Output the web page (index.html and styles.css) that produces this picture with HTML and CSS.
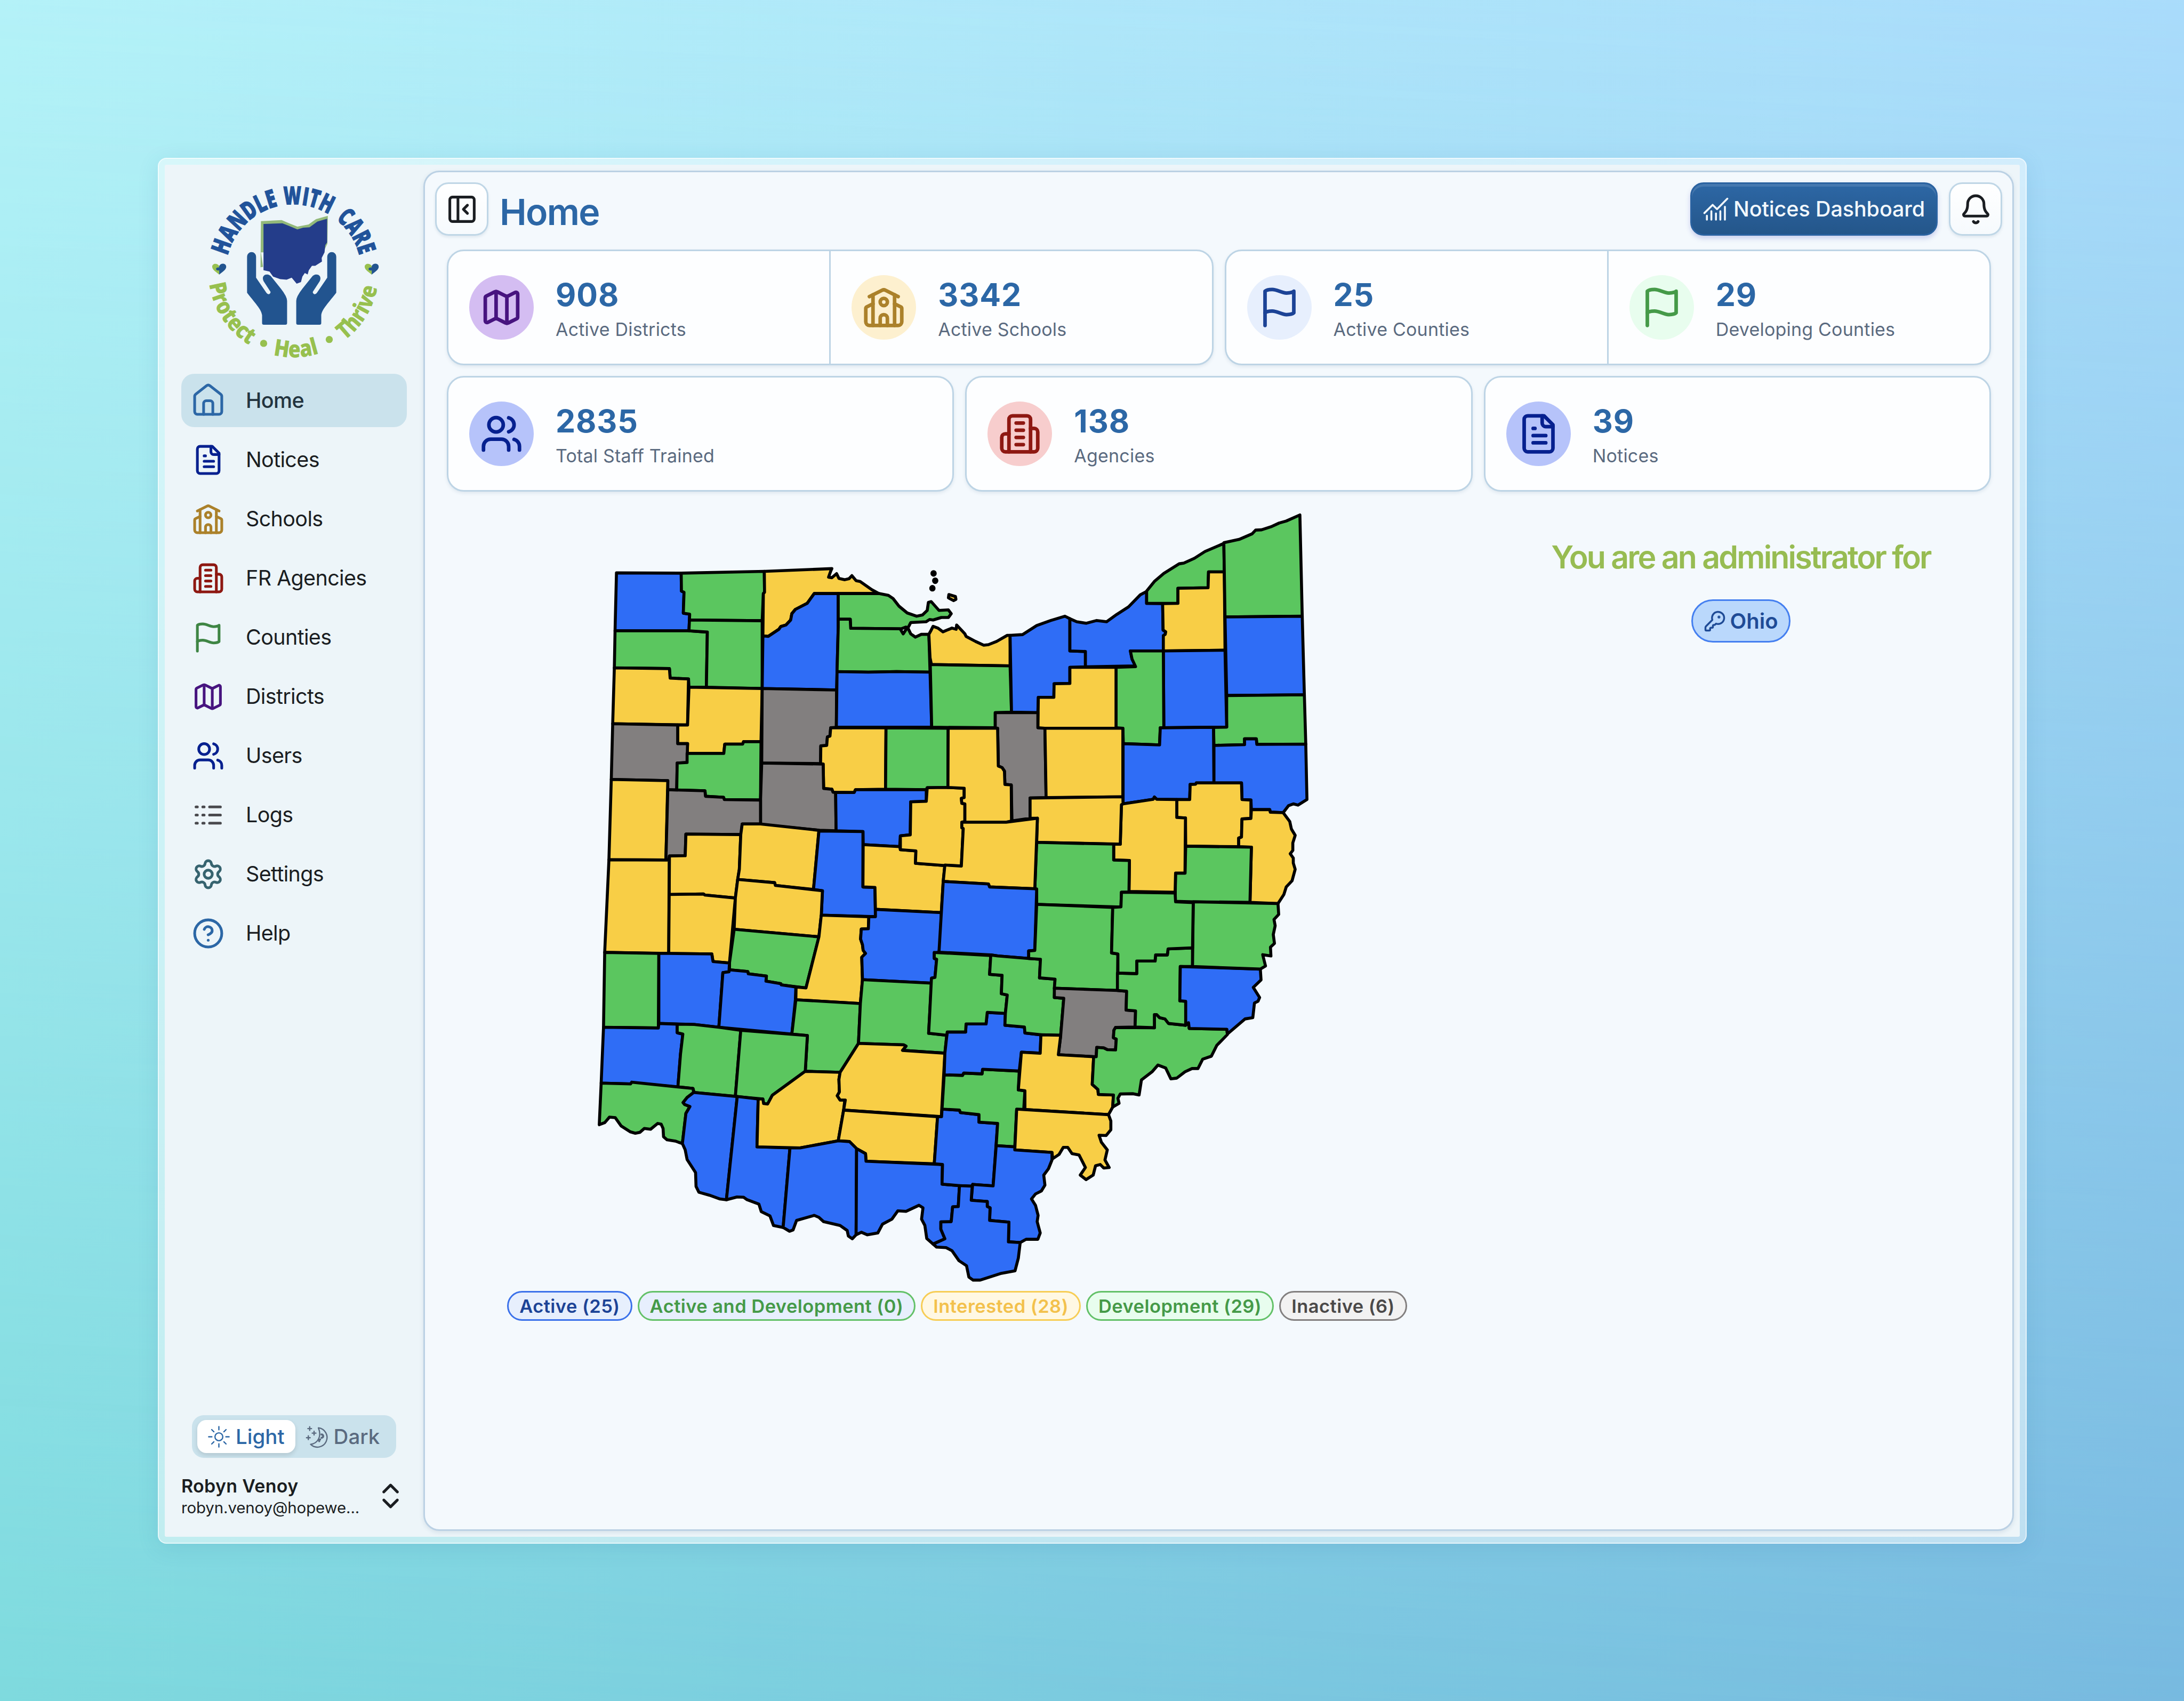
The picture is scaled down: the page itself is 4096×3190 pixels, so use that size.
FILE: index.html
```html
<!DOCTYPE html>
<html lang="en">
<head>
<meta charset="utf-8">
<title>Handle With Care</title>
<link rel="stylesheet" href="styles.css">
</head>
<body>
<svg class="sprite" aria-hidden="true">
  <symbol id="i-home" viewBox="0 0 24 24"><path d="M2 8.8a2 2 0 0 1 .8-1.6l8-6.3a2 2 0 0 1 2.4 0l8 6.3a2 2 0 0 1 .8 1.6V20a2 2 0 0 1-2 2H4a2 2 0 0 1-2-2z"/><path d="M8.6 22v-8a2 2 0 0 1 2-2h2.8a2 2 0 0 1 2 2v8"/></symbol>
  <symbol id="i-file" viewBox="0 0 24 24"><path d="M15 2H6a2 2 0 0 0-2 2v16a2 2 0 0 0 2 2h12a2 2 0 0 0 2-2V7Z"/><path d="M14 2v4a2 2 0 0 0 2 2h4"/><path d="M10 9H9"/><path d="M16 13H9"/><path d="M16 17H9"/></symbol>
  <symbol id="i-school" viewBox="0 0 24 24"><path d="M14 22v-4a2 2 0 1 0-4 0v4"/><path d="m18 10 3.447 1.724a1 1 0 0 1 .553.894V20a2 2 0 0 1-2 2H4a2 2 0 0 1-2-2v-7.382a1 1 0 0 1 .553-.894L6 10"/><path d="M18 5v17"/><path d="m4 6 7.106-3.553a2 2 0 0 1 1.788 0L20 6"/><path d="M6 5v17"/><circle cx="12" cy="9" r="2"/></symbol>
  <symbol id="i-building" viewBox="0 0 24 24"><path d="M6 22V4a2 2 0 0 1 2-2h8a2 2 0 0 1 2 2v18Z"/><path d="M6 12H4a2 2 0 0 0-2 2v6a2 2 0 0 0 2 2h2"/><path d="M18 9h2a2 2 0 0 1 2 2v9a2 2 0 0 1-2 2h-2"/><path d="M10 6h4"/><path d="M10 10h4"/><path d="M10 14h4"/><path d="M10 18h4"/></symbol>
  <symbol id="i-flag" viewBox="0 0 24 24"><path d="M4 15s1-1 4-1 5 2 8 2 4-1 4-1V3s-1 1-4 1-5-2-8-2-4 1-4 1z"/><path d="M4 22v-7"/></symbol>
  <symbol id="i-map" viewBox="0 0 24 24"><path d="M14.106 5.553a2 2 0 0 0 1.788 0l3.659-1.83A1 1 0 0 1 21 4.619v12.764a1 1 0 0 1-.553.894l-4.553 2.277a2 2 0 0 1-1.788 0l-4.212-2.106a2 2 0 0 0-1.788 0l-3.659 1.83A1 1 0 0 1 3 19.381V6.618a1 1 0 0 1 .553-.894l4.553-2.277a2 2 0 0 1 1.788 0z"/><path d="M15 5.764v15"/><path d="M9 3.236v15"/></symbol>
  <symbol id="i-users" viewBox="0 0 24 24"><path d="M16 21v-2a4 4 0 0 0-4-4H6a4 4 0 0 0-4 4v2"/><circle cx="9" cy="7" r="4"/><path d="M22 21v-2a4 4 0 0 0-3-3.87"/><path d="M16 3.13a4 4 0 0 1 0 7.75"/></symbol>
  <symbol id="i-logs" viewBox="0 0 24 24"><path d="M13 12h8M13 18h8M13 6h8M3 12h1M3 18h1M3 6h1M8 12h1M8 18h1M8 6h1"/></symbol>
  <symbol id="i-gear" viewBox="0 0 24 24"><path d="M9.671 4.136a2.34 2.34 0 0 1 4.659 0 2.34 2.34 0 0 0 3.319 1.915 2.34 2.34 0 0 1 2.33 4.033 2.34 2.34 0 0 0 0 3.831 2.34 2.34 0 0 1-2.33 4.033 2.34 2.34 0 0 0-3.319 1.915 2.34 2.34 0 0 1-4.659 0 2.34 2.34 0 0 0-3.32-1.915 2.34 2.34 0 0 1-2.33-4.033 2.34 2.34 0 0 0 0-3.831A2.34 2.34 0 0 1 6.35 6.051a2.34 2.34 0 0 0 3.319-1.915"/><circle cx="12" cy="12" r="3"/></symbol>
  <symbol id="i-help" viewBox="0 0 24 24"><circle cx="12" cy="12" r="10"/><path d="M9.09 9a3 3 0 0 1 5.83 1c0 2-3 3-3 3"/><path d="M12 17h.01"/></symbol>
  <symbol id="i-bell" viewBox="0 0 24 24"><path d="M10.268 21a2 2 0 0 0 3.464 0"/><path d="M3.262 15.326A1 1 0 0 0 4 17h16a1 1 0 0 0 .74-1.673C19.41 13.956 18 12.499 18 8A6 6 0 0 0 6 8c0 4.499-1.411 5.956-2.738 7.326"/></symbol>
  <symbol id="i-panel" viewBox="0 0 24 24"><rect x="3" y="3" width="18" height="18" rx="2"/><path d="M9 3v18"/><path d="m16 15-3-3 3-3"/></symbol>
  <symbol id="i-updown" viewBox="0 0 24 24"><path d="m7 15 5 5 5-5"/><path d="m7 9 5-5 5 5"/></symbol>
  <symbol id="i-key" viewBox="0 0 24 24"><path d="M2.586 17.414A2 2 0 0 0 2 18.828V21a1 1 0 0 0 1 1h3a1 1 0 0 0 1-1v-1a1 1 0 0 1 1-1h1a1 1 0 0 0 1-1v-1a1 1 0 0 1 1-1h.172a2 2 0 0 0 1.414-.586l.814-.814a6.5 6.5 0 1 0-4-4z"/><circle cx="16.5" cy="7.5" r=".5" fill="currentColor"/></symbol>
  <symbol id="i-chart" viewBox="0 0 24 24"><path d="M1.200 15.800 9 8.100l4.100 4L22.800 2.300"/><path d="M3.600 18.300V22M7.800 14V22M12.100 16.100V22M16.200 14V22M20.500 9.900V22"/></symbol>
  <symbol id="i-sun" viewBox="0 0 24 24"><circle cx="12" cy="12" r="4.300"/><path d="M12 .8v3.500M12 19.700v3.500M.8 12h3.500M19.700 12h3.500M4.100 4.100l2.400 2.400M17.500 17.500l2.400 2.400M19.900 4.100l-2.400 2.400M6.500 17.500l-2.400 2.400"/></symbol>
  <symbol id="i-moon" viewBox="0 0 24 24"><path d="M13.500 2.200A10.600 10.600 0 1 1 5 20.300C13 19.300 17.500 11.500 13.500 2.200z"/><path d="M17 9.500a1.600 1.600 0 0 1 0 3.600M15.500 15a1.200 1.200 0 0 0-1 1.800" stroke-width="2.200"/><path d="M4 1v4M2 3h4M8.800 6v4M6.800 8h4M2.500 11v4M.5 13h4"/></symbol>
</svg>

<div class="window">
  <aside class="sidebar">
    <svg class="logo" viewBox="0 0 1440 1380">
      <defs>
        <path id="arc-top" d="M272 585A475 475 0 0 1 1194 585"/>
        <path id="arc-bottom" d="M143 782A596 596 0 0 0 1323 786"/>
        <g id="hand"><path d="M408 590a31.500 31.500 0 0 1 63 0V738L543 843q8 12 19 10q12-5 10-17L524 763C512 740 520 715 548 715Q566 716 577 730L645 815Q688 870 688 900V1055q0 12-12 12H525q-12 0-12-12V1000C507 960 480 935 408 843Z"/></g>
        <g id="heart"><path class="logo-green" d="M0 38C-20 20-49 5-49-18C-49-40-14-46 0-22Z"/><path class="logo-blue" d="M0 38C20 20 49 5 49-16C49-42 12-46 0-22V-12Q-22-14-22 0Q-20 12 0 8Z"/></g>
      </defs>
      <text class="logo-top"><textPath href="#arc-top" startOffset="0" textLength="522" lengthAdjust="spacingAndGlyphs">HANDLE</textPath></text>
      <text class="logo-top"><textPath href="#arc-top" startOffset="560" textLength="332" lengthAdjust="spacingAndGlyphs">WITH</textPath></text>
      <text class="logo-top"><textPath href="#arc-top" startOffset="950" textLength="308" lengthAdjust="spacingAndGlyphs">CARE</textPath></text>
      <text class="logo-bottom"><textPath href="#arc-bottom" startOffset="0" textLength="526" lengthAdjust="spacingAndGlyphs">Protect</textPath></text>
      <text class="logo-bottom"><textPath href="#arc-bottom" startOffset="710" textLength="326" lengthAdjust="spacingAndGlyphs">Heal</textPath></text>
      <text class="logo-bottom"><textPath href="#arc-bottom" startOffset="1238" textLength="446" lengthAdjust="spacingAndGlyphs">Thrive</textPath></text>
      <circle class="logo-green" cx="524" cy="1197" r="25"/>
      <circle class="logo-green" cx="983" cy="1170" r="25"/>
      <path class="logo-edge" d="M505 342L650 335L700 356L760 380L838 365L890 328L973 305L970 500L940 560H505L520 662L502 665Z"/>
      <path class="logo-state" d="M523 362L655 357L700 375L760 400L800 388L845 385L900 345L968 325V490L955 510L950 560L930 600L932 625L885 655L862 655L840 685L832 715L812 705L795 730L785 768L755 780L720 738L685 752L640 748L590 730L565 695L523 685Z"/>
      <use class="logo-blue" href="#hand"/>
      <use class="logo-blue" href="#hand" transform="matrix(-1 0 0 1 1440 0)"/>
      <use href="#heart" transform="translate(213 678)"/>
      <use href="#heart" transform="translate(1280 678)"/>
    </svg>

    <nav class="nav">
      <a class="nav-item active c-home"><svg class="icon"><use href="#i-home"/></svg><span>Home</span></a>
      <a class="nav-item c-notices"><svg class="icon"><use href="#i-file"/></svg><span>Notices</span></a>
      <a class="nav-item c-schools"><svg class="icon"><use href="#i-school"/></svg><span>Schools</span></a>
      <a class="nav-item c-agencies"><svg class="icon"><use href="#i-building"/></svg><span>FR Agencies</span></a>
      <a class="nav-item c-counties"><svg class="icon"><use href="#i-flag"/></svg><span>Counties</span></a>
      <a class="nav-item c-districts"><svg class="icon"><use href="#i-map"/></svg><span>Districts</span></a>
      <a class="nav-item c-notices"><svg class="icon"><use href="#i-users"/></svg><span>Users</span></a>
      <a class="nav-item c-logs"><svg class="icon"><use href="#i-logs"/></svg><span>Logs</span></a>
      <a class="nav-item c-settings"><svg class="icon"><use href="#i-gear"/></svg><span>Settings</span></a>
      <a class="nav-item c-home"><svg class="icon"><use href="#i-help"/></svg><span>Help</span></a>
    </nav>

    <div class="theme">
      <button class="theme-btn on"><svg class="icon"><use href="#i-sun"/></svg><span>Light</span></button>
      <button class="theme-btn"><svg class="icon"><use href="#i-moon"/></svg><span>Dark</span></button>
    </div>

    <div class="user">
      <div class="user-text">
        <div class="user-name">Robyn Venoy</div>
        <div class="user-mail">robyn.venoy@hopewe...</div>
      </div>
      <svg class="icon"><use href="#i-updown"/></svg>
    </div>
  </aside>

  <main class="panel">
    <header class="header">
      <button class="square"><svg class="icon"><use href="#i-panel"/></svg></button>
      <h1>Home</h1>
      <button class="primary"><svg class="icon"><use href="#i-chart"/></svg><span>Notices Dashboard</span></button>
      <button class="square"><svg class="icon"><use href="#i-bell"/></svg></button>
    </header>

    <section class="stats stats-2">
      <div class="card">
        <div class="stat"><div class="badge b-districts"><svg class="icon"><use href="#i-map"/></svg></div><div><div class="num">908</div><div class="label">Active Districts</div></div></div>
        <div class="stat"><div class="badge b-schools"><svg class="icon"><use href="#i-school"/></svg></div><div><div class="num">3342</div><div class="label">Active Schools</div></div></div>
      </div>
      <div class="card">
        <div class="stat"><div class="badge b-active"><svg class="icon"><use href="#i-flag"/></svg></div><div><div class="num">25</div><div class="label">Active Counties</div></div></div>
        <div class="stat"><div class="badge b-dev"><svg class="icon"><use href="#i-flag"/></svg></div><div><div class="num">29</div><div class="label">Developing Counties</div></div></div>
      </div>
    </section>
    <section class="stats stats-3">
      <div class="card"><div class="stat"><div class="badge b-staff"><svg class="icon"><use href="#i-users"/></svg></div><div><div class="num">2835</div><div class="label">Total Staff Trained</div></div></div></div>
      <div class="card"><div class="stat"><div class="badge b-agencies"><svg class="icon"><use href="#i-building"/></svg></div><div><div class="num">138</div><div class="label">Agencies</div></div></div></div>
      <div class="card"><div class="stat"><div class="badge b-staff"><svg class="icon"><use href="#i-file"/></svg></div><div><div class="num">39</div><div class="label">Notices</div></div></div></div>
    </section>

    <section class="content">
      <div class="map-col">
        <svg class="map" viewBox="0 0 1700 1812">
          <g transform="scale(.54847 .58673)">
            <g>
              <path class="A" d="M100 263L375 264 376 335 387 340 384 423 411 427 408 493 94 493Z"/>
              <path class="D" d="M375 264L728 257 729 340 724 345 719 453 410 450 411 427 384 423 387 340 376 335Z"/>
              <path class="I" d="M728 257L1015 246 1010 256 1001 280 1015 282 1035 266 1045 285 1070 290 1088 286 1100 274 1118 294 1135 297 1185 330 1215 345 940 345 910 384 860 408 845 425 840 450 820 470 798 476 790 487 745 515 722 513 724 345 729 340Z"/>
              <path class="D" d="M94 493L408 493 486 498 482 717 408 717 406 684 328 681 325 643 91 640Z"/>
              <path class="D" d="M410 450L719 453 719 722 482 717 486 498 408 493Z"/>
              <path class="A" d="M940 345L1042 345 1042 480 1035 728 719 722 722 513 745 515 790 487 798 476 820 470 840 450 845 425 860 408 910 384Z"/>
              <path class="D" d="M1042 345L1215 345 1255 352 1275 365 1300 395 1335 422 1375 435 1400 430 1420 412 1425 380 1437 377 1470 412 1510 410 1522 425 1510 440 1480 440 1445 450 1430 448 1415 457 1350 460 1338 482 1330 478 1310 485 1095 483 1093 447 1042 447Z"/>
              <path class="D" d="M1042 447L1093 447 1095 483 1305 485 1318 505 1330 488 1338 482 1350 505 1370 518 1395 507 1427 507 1432 657 1290 655 1170 657 1037 655 1042 480Z"/>
              <path class="I" d="M91 640L325 643 328 681 406 684 402 867 84 862Z"/>
              <path class="I" d="M408 717L719 722 714 933 640 933 636 943 560 943 556 980 400 980 402 941 360 941 360 867 402 867Z"/>
              <path class="N" d="M719 722L1035 728 1034 876 1010 878 1007 911 996 914 993 948 968 950 967 1020 717 1018Z"/>
              <path class="N" d="M84 862L360 867 360 941 402 941 400 1016 358 1018 356 1125 318 1124 318 1088 78 1083Z"/>
              <path class="D" d="M400 980L556 980 560 943 636 943 640 933 714 933 712 1165 558 1163 555 1154 478 1150 476 1128 356 1125 358 1018 400 1016Z"/>
              <path class="A" d="M1037 655L1170 657 1290 655 1432 657 1439 876 1034 876Z"/>
              <path class="I" d="M1010 878L1245 878 1243 1122 1115 1124 1110 1135 1020 1134 1015 1122 980 1119 978 1022 967 1020 968 950 993 948 996 914 1007 911Z"/>
              <path class="D" d="M1245 878L1509 880 1508 1115 1420 1116 1416 1124 1243 1122Z"/>
              <path class="N" d="M717 1018L978 1022 980 1119 1015 1122 1020 1134 1031 1135 1033 1287 960 1285 712 1262 712 1165Z"/>
              <path class="I" d="M78 1083L318 1088 310 1403 68 1402Z"/>
              <path class="N" d="M318 1124L476 1128 478 1150 555 1154 558 1163 712 1165 712 1260 634 1260 630 1302 395 1300 392 1386 325 1387 322 1403 310 1403Z"/>
              <path class="A" d="M1031 1135L1110 1135 1115 1124 1416 1124 1416 1170 1350 1172 1348 1303 1306 1307 1303 1350 1148 1342 1147 1290 1033 1287Z"/>
              <path class="I" d="M325 1387L392 1386 395 1300 628 1302 622 1440 615 1480 605 1554 475 1542 470 1538 324 1540Z"/>
              <path class="I" d="M634 1260L712 1260 960 1285 937 1520 775 1504 772 1493 615 1480 622 1440 628 1302Z"/>
              <path class="A" d="M960 1288L1147 1290 1147 1510 1198 1512 1200 1628 970 1622 975 1525 937 1520Z"/>
              <path class="I" d="M68 1402L310 1403 324 1404 322 1774 50 1770Z"/>
              <path class="I" d="M1148 1342L1303 1350 1306 1362 1372 1367 1370 1416 1495 1425 1488 1488 1480 1612 1200 1599 1198 1512 1147 1510Z"/>
              <path class="I" d="M1420 1116L1508 1115 1577 1118 1577 1155 1565 1158 1567 1178 1580 1180 1580 1250 1567 1253 1567 1275 1573 1278 1565 1427 1495 1425 1370 1416 1372 1367 1306 1362 1306 1307 1348 1303 1350 1172 1416 1170Z"/>
            </g>
            <g transform="translate(1495 0)">
              <path class="I" d="M-68 507L-58 490 -50 475 -30 482 -8 497 30 482 48 487 50 470 85 505 90 515 130 535 165 550 185 548 220 535 265 511 277 511 277 632 -57 627 -63 600Z"/>
              <path class="D" d="M-62 627L277 632 283 816 214 818 214 878 -56 876Z"/>
              <path class="A" d="M277 511L330 508 390 472 450 452 510 435 531 445 531 573 597 575 597 636 531 638 531 702 464 703 463 757 397 757 395 818 283 816Z"/>
              <path class="A" d="M531 445L560 457 600 463 645 452 687 457 730 428 780 398 830 350 857 337 857 384 925 385 927 490 938 497 936 507 928 512 928 573 788 573 795 605 810 632 597 636 597 575 531 573Z"/>
              <path class="D" d="M857 335L890 297 930 265 995 227 1015 224 1060 205 1105 178 1185 146 1187 259 1120 259 1118 322 990 324 990 384 857 384Z"/>
              <path class="I" d="M1187 259L1190 570 928 573 928 512 936 507 938 497 927 490 925 385 990 384 990 324 1118 322 1120 259Z"/>
              <path class="D" d="M1185 143L1250 130 1305 108 1320 93 1345 92 1385 80 1420 65 1450 57 1508 33 1518 435 1190 438Z"/>
              <path class="A" d="M1190 438L1518 435 1527 747 1197 750Z"/>
              <path class="D" d="M1197 750L1527 747 1533 943 1325 944 1323 922 1273 922 1273 945 1143 948 1141 876 1197 875Z"/>
              <path class="A" d="M928 573L1190 570 1197 875 1141 876 930 878Z"/>
              <path class="D" d="M727 638L810 635 795 605 788 573 928 573 930 878 915 878 912 946 758 941 756 880 727 878Z"/>
              <path class="I" d="M531 638L727 638 727 880 395 880 397 757 463 757 464 703 531 702Z"/>
              <path class="N" d="M214 818L395 818 395 878 425 880 430 1155 362 1157 362 1237 285 1248 282 1105 255 1103 253 1050 243 1036 227 1030 224 880 214 878Z"/>
              <path class="I" d="M14 880L224 880 227 1030 243 1036 253 1050 255 1103 282 1105 283 1248 260 1253 85 1253 85 1180 72 1178 70 1158 82 1155 82 1118 13 1115Z"/>
              <path class="I" d="M425 880L756 880 756 1152 430 1155Z"/>
              <path class="A" d="M757 941L912 946 915 878 1141 876 1143 1097 1068 1097 1065 1102 1042 1103 1040 1163 900 1162 890 1153 885 1162 757 1180Z"/>
              <path class="A" d="M1143 948L1273 945 1273 922 1323 922 1325 944 1533 943 1538 1163 1500 1185 1480 1180 1460 1187 1437 1215 1382 1213 1380 1203 1302 1203 1300 1165 1262 1163 1260 1097 1143 1097Z"/>
              <path class="I" d="M1042 1103L1065 1102 1068 1097 1260 1097 1262 1163 1300 1165 1300 1238 1262 1240 1260 1312 1248 1316 1248 1350 1023 1348 1022 1236 985 1234 985 1163 1040 1163Z"/>
              <path class="I" d="M1302 1203L1380 1203 1382 1213 1437 1215 1465 1250 1472 1280 1488 1305 1478 1335 1478 1365 1467 1378 1480 1395 1480 1415 1488 1440 1475 1485 1450 1510 1440 1540 1415 1576 1296 1571 1302 1352 1248 1350 1248 1316 1260 1312 1262 1240 1300 1238Z"/>
              <path class="D" d="M1023 1348L1302 1352 1296 1571 1055 1569 978 1567 980 1455 1020 1455Z"/>
              <path class="I" d="M750 1183L757 1180 885 1162 890 1153 900 1162 985 1163 985 1234 1022 1236 1020 1455 980 1455 978 1531 782 1528 784 1405 717 1403 717 1340 745 1340Z"/>
              <path class="I" d="M362 1157L756 1152 757 1180 750 1183 745 1340 390 1333 393 1237 362 1237Z"/>
              <path class="D" d="M390 1333L717 1340 717 1403 784 1405 782 1530 750 1531 748 1590 390 1579 390 1518 382 1517Z"/>
              <path class="I" d="M72 1253L260 1253 393 1237 382 1517 190 1510 185 1498 -7 1488 0 1423 70 1427 78 1278 72 1275Z"/>
            </g>
            <g transform="translate(0 1534)">
              <path class="I" d="M324 6L470 4 475 8 605 20 580 278 510 272 505 242 322 240Z"/>
              <path class="I" d="M615 -54L772 -41 775 -30 975 -9 970 88 960 174 600 144 605 20Z"/>
              <path class="D" d="M600 144L960 174 905 377 800 365 798 360 735 350 737 330 660 321 658 312 580 305 580 278Z"/>
              <path class="D" d="M50 236L280 240 278 536 45 533Z"/>
              <path class="A" d="M280 240L322 240 505 242 510 272 580 278 578 313 552 316 535 533 430 522 280 518Z"/>
              <path class="A" d="M580 305L658 312 660 321 737 330 735 350 798 360 800 365 862 373 860 424 845 560 535 533 552 316 578 313Z"/>
              <path class="I" d="M970 88L1172 94 1170 142 1140 143 1137 183 1145 205 1148 228 1158 240 1142 255 1145 344 1136 439 862 424 863 373 905 377 960 174Z"/>
              <path class="A" d="M1200 65L1480 78 1475 200 1470 235 1450 238 1450 260 1460 263 1453 335 1440 338 1438 358 1145 344 1142 255 1158 240 1148 228 1145 205 1137 183 1140 143 1170 142 1172 94 1200 94Z"/>
              <path class="D" d="M862 424L1136 439 1128 597 1050 712 902 708 911 566 845 560Z"/>
              <path class="D" d="M1145 344L1438 358 1430 490 1426 557 1503 565 1495 636 1315 625 1330 608 1320 603 1128 597 1136 439Z"/>
              <path class="A" d="M45 533L278 536 280 518 358 521 358 555 382 560 372 640 361 771 165 753 160 758 35 755Z"/>
              <path class="D" d="M358 521L430 522 535 533 628 545 605 808 430 792 425 776 361 770 372 640 382 560 358 555Z"/>
              <path class="D" d="M628 545L911 566 902 708 762 803 742 838 725 836 722 818 605 808Z"/>
              <path class="D" d="M35 755L160 758 165 751 361 770 425 776 428 792 400 812 383 832 390 840 412 848 395 875 380 995 350 985 315 980 300 968 298 935 290 918 275 915 245 938 218 935 200 950 180 954 158 948 120 925 95 892 70 890 50 912 27 920Z"/>
              <path class="A" d="M428 792L613 808 567 1218 540 1215 495 1200 450 1188 438 1165 436 1110 400 1058 392 1020 380 995 395 875 412 848 390 840 383 832 400 812Z"/>
              <path class="A" d="M613 808L702 818 697 1008 837 1012 808 1328 767 1320 752 1282 715 1265 705 1235 655 1218 640 1208 612 1207 567 1218Z"/>
              <path class="I" d="M702 818L722 818 725 836 742 838 762 803 902 708 1050 712 1045 740 1047 790 1038 805 1050 822 1070 822 1065 862 1042 984 880 1012 697 1008Z"/>
              <path class="I" d="M1128 597L1320 603 1330 608 1315 625 1495 636 1480 888 1065 862 1072 822 1050 822 1038 805 1047 790 1045 740 1050 712Z"/>
              <path class="I" d="M1065 862L1464 888 1450 1075 1160 1065 1158 1035 1120 1015 1090 987 1042 984Z"/>
              <path class="A" d="M837 1012L880 1012 1042 984 1090 987 1120 1015 1118 1357 1102 1373 1085 1362 1080 1340 1050 1320 980 1305 960 1288 940 1280 865 1300 850 1338 835 1343 808 1328Z"/>
              <path class="A" d="M1120 1015L1158 1035 1160 1065 1485 1078 1483 1156 1557 1162 1552 1245 1528 1246 1522 1305 1478 1306 1478 1335 1495 1373 1445 1394 1418 1372 1410 1320 1396 1295 1402 1250 1385 1240 1330 1264 1295 1262 1270 1295 1230 1315 1210 1350 1165 1357 1140 1347 1118 1357Z"/>
            </g>
            <g transform="translate(1495 1534)">
              <path class="A" d="M-12 858L62 862 66 872 145 880 145 910 224 915 205 1163 118 1157 116 1164 62 1162 -12 1156 -10 1078 -45 1075 -31 888 -14 888Z"/>
              <path class="D" d="M0 722L75 724 80 715 158 718 160 700 316 707 312 782 340 785 335 860 305 860 297 1008 218 1003 224 915 145 910 145 880 66 872 62 862 -12 858 -3 722Z"/>
              <path class="A" d="M10 552L88 552 90 520 175 520 180 474 257 478 255 525 338 532 340 556 408 563 405 636 325 632 316 707 160 700 158 718 80 715 75 724 -3 722 0 636Z"/>
              <path class="D" d="M-45 236L195 248 190 323 243 327 240 400 265 405 257 478 180 474 175 520 90 520 88 552 10 552 8 565 -69 557 -65 490 -57 338 -42 335 -35 263 -45 260Z"/>
              <path class="A" d="M-7 -46L185 -36 190 -24 382 -17 390 -14 382 228 356 230 356 260 225 250 195 246 -25 235 -15 78Z"/>
              <path class="D" d="M195 246L225 250 356 260 406 263 402 337 468 342 465 415 505 418 492 565 408 563 340 556 338 532 255 525 257 478 265 405 240 400 243 327 190 323Z"/>
              <path class="D" d="M390 45L713 57 708 238 735 242 733 387 465 378 468 342 402 337 406 263 356 260 356 230 382 228Z"/>
              <path class="N" d="M465 378L733 387 772 390 770 465 810 468 808 532 725 534 718 545 716 575 728 580 725 623 690 622 675 615 645 613 643 650 482 642 492 565 505 418 465 415Z"/>
              <path class="I" d="M408 563L492 565 482 642 632 650 626 760 650 780 652 800 716 802 713 850 695 880 340 860 340 785 312 782 325 632 405 636Z"/>
              <path class="I" d="M305 858L340 860 695 880 705 905 705 940 685 963 655 962 665 990 690 1020 680 1060 698 1090 675 1092 660 1078 640 1083 630 1120 600 1138 575 1120 597 1090 570 1040 540 1035 522 1010 503 1010 485 1038 458 1055 455 1030 297 1020Z"/>
              <path class="D" d="M725 534L890 535 890 483 900 483 912 495 935 500 950 518 1020 525 1035 515 1038 538 1198 541 1200 562 1155 605 1132 648 1095 660 1075 697 1050 697 1020 710 985 735 960 738 938 695 905 683 880 710 835 742 825 802 800 797 745 798 735 815 740 835 713 850 716 802 652 800 650 780 626 760 632 650 643 650 645 613 675 615 690 622 725 623 728 580 716 575 718 545Z"/>
              <path class="D" d="M733 318L815 320 815 270 893 270 895 246 945 246 948 222 1052 218 1052 292 1000 292 998 428 1023 430 1023 525 950 518 935 500 912 495 900 483 890 483 890 535 808 532 810 468 770 465 772 390 733 387Z"/>
              <path class="A" d="M1000 292L1340 302 1343 345 1310 375 1337 415 1330 430 1315 437 1308 495 1275 500 1200 560 1198 541 1038 538 1035 515 1023 525 1023 430 998 428Z"/>
              <path class="D" d="M1055 35L1415 42 1418 85 1398 105 1403 130 1395 165 1400 200 1383 215 1385 250 1350 245 1362 290 1340 302 1052 292Z"/>
              <path class="D" d="M750 -3L978 0 980 35 1055 38 1052 218 948 222 945 246 895 246 893 270 815 270 815 320 735 318 735 242 708 238 713 57 748 55Z"/>
              <path class="A" d="M218 1003L297 1008 297 1020 455 1030 455 1060 440 1095 420 1120 425 1160 410 1183 385 1195 368 1215 385 1240 396 1280 392 1305 405 1350 395 1375 345 1375 320 1388 270 1385 272 1307 190 1300 192 1250 180 1245 180 1225 112 1220 118 1157 205 1163Z"/>
              <path class="A" d="M62 1162L116 1164 112 1220 180 1225 180 1245 192 1250 190 1300 272 1307 270 1385 320 1388 312 1450 298 1500 240 1510 150 1537 120 1537 102 1525 92 1480 60 1460 30 1420 5 1408 -35 1406 -50 1394 0 1373 -17 1335 -17 1306 27 1305 33 1246 57 1245Z"/>
            </g>
            <circle class="island" cx="1447" cy="265" r="7"/>
            <circle class="island" cx="1454" cy="294" r="7"/>
            <circle class="island" cx="1442" cy="324" r="7"/>
            <path class="I" d="M1512 349L1540 357 1542 368 1532 373 1510 362Z"/>
          </g>
        </svg>
        <div class="legend">
          <span class="pill p-active">Active (25)</span>
          <span class="pill p-both">Active and Development (0)</span>
          <span class="pill p-interested">Interested (28)</span>
          <span class="pill p-dev">Development (29)</span>
          <span class="pill p-inactive">Inactive (6)</span>
        </div>
      </div>
      <div class="admin">
        <h2>You are an administrator for</h2>
        <span class="state"><svg class="icon"><use href="#i-key"/></svg><span>Ohio</span></span>
      </div>
    </section>
  </main>
</div>
</body>
</html>
```
FILE: styles.css
```css
* { box-sizing: border-box; }

body {
  margin: 0;
  width: 4096px;
  height: 3190px;
  padding: 296px;
  font-family: Inter, "Liberation Sans", sans-serif;
  color: #1a1d21;
  background: linear-gradient(to right, #b8f4fa, #aadcfb);
  position: relative;
  overflow: hidden;
}

/* lower tint of the backdrop, fading in from the top */
body::before {
  content: "";
  position: absolute;
  inset: 0;
  background: linear-gradient(to right, #7edade, #74b7de);
  -webkit-mask-image: linear-gradient(183deg, transparent, #000);
  mask-image: linear-gradient(183deg, transparent, #000);
}

button { font: inherit; color: inherit; border: 0; background: none; padding: 0; }

.sprite { position: absolute; width: 0; height: 0; }

.icon {
  width: 61px;
  height: 61px;
  flex: none;
  fill: none;
  stroke: currentColor;
  stroke-width: 2;
  stroke-linecap: round;
  stroke-linejoin: round;
  overflow: visible;
}
symbol { overflow: visible; }

.window {
  position: relative;
  display: flex;
  width: 3505px;
  height: 2599px;
  padding: 11px;
  border: 2px solid rgba(255, 255, 255, .6);
  border-radius: 16px;
  background: linear-gradient(#edf5f9, #edf5f9) content-box, rgba(255, 255, 255, .5);
  box-shadow: 0 8px 40px rgba(40, 100, 150, .12);
}

/* ---------- sidebar ---------- */
.sidebar {
  width: 487px;
  padding: 14px 31px 35px 31px;
  display: flex;
  flex-direction: column;
}
.logo { width: 386px; height: 370px; margin-left: 14px; flex: none; overflow: visible; }
.logo-top, .logo-bottom { font-family: "Open Sans", "Liberation Sans", sans-serif; }
.logo-top { font-size: 174px; font-weight: 800; fill: #21539a; stroke: #21539a; stroke-width: 5; }
.logo-bottom { font-size: 163px; font-weight: 800; fill: #97c04f; }
.logo-blue { fill: #22548f; }
.logo-green { fill: #97c04f; }
.logo-state { fill: #243d8a; }
.logo-edge { fill: #93b97a; }

.nav { display: flex; flex-direction: column; gap: 11px; margin-top: 8px; }
.nav-item {
  display: flex;
  align-items: center;
  gap: 40px;
  height: 100px;
  padding-left: 20px;
  border-radius: 24px;
  font-size: 39.500px;
  letter-spacing: -.65px;
}
.nav-item span { color: #1a1d21; }
.nav-item.active { background: #cae2ec; }
.nav-item.active span { color: #23343f; font-weight: 500; }
.c-home { color: #2c67a6; }
.c-notices { color: #06208f; }
.c-schools { color: #ab812a; }
.c-agencies { color: #8e1812; }
.c-counties { color: #3e8544; }
.c-districts { color: #47147f; }
.c-logs { color: #4a4a4e; }
.c-settings { color: #36636f; }

.theme {
  display: flex;
  align-self: center;
  align-items: center;
  width: 383px;
  height: 80px;
  margin-top: auto;
  padding: 0 10px;
  border-radius: 22px;
  background: #cae2ec;
}
.theme-btn {
  display: flex;
  align-items: center;
  gap: 11px;
  height: 62px;
  padding: 0 20px;
  font-size: 38.500px;
  font-weight: 500;
  color: #5a6a7f;
  border-radius: 17px;
}
.theme-btn .icon { width: 41px; height: 41px; stroke-width: 1.400; }
.theme-btn.on { background: #fff; color: #2c67a6; box-shadow: 0 4px 8px rgba(0, 0, 0, .12); }

.user { display: flex; align-items: center; justify-content: space-between; margin-top: 31px; }
.user .icon { margin-top: -2px; }
.user-name { font-size: 34px; line-height: 43px; font-weight: 600; letter-spacing: .3px; }
.user-mail { font-size: 29.500px; line-height: 39px; letter-spacing: -.15px; }

/* ---------- main panel ---------- */
.panel {
  flex: 1;
  margin: 11px 11px 11px 0;
  padding: 19px;
  border: 3px solid #bbd1e4;
  border-radius: 30px;
  background: #f4f9fd;
  box-shadow: 0 3px 8px rgba(40, 80, 120, .12);
}
.header { display: flex; align-items: center; height: 100px; }
.square {
  display: flex;
  align-items: center;
  justify-content: center;
  width: 100px;
  height: 100px;
  border: 3px solid #bfd6e6;
  border-radius: 25px;
  background: linear-gradient(#fff, #f6fafd);
  box-shadow: 0 3px 5px rgba(40, 80, 120, .1);
}
h1 {
  margin: 9px auto 0 21px;
  font-size: 68px;
  line-height: 80px;
  font-weight: 600;
  letter-spacing: -1.700px;
  color: #2c67a6;
}
.primary {
  display: flex;
  align-items: center;
  justify-content: center;
  gap: 9px;
  width: 464px;
  height: 100px;
  margin-right: 21px;
  border: 3px solid #2a62a0;
  border-radius: 25px;
  background: linear-gradient(#2d67a5, #24568a);
  box-shadow: inset 0 5px 0 rgba(255, 255, 255, .12), 0 5px 10px rgba(70, 80, 190, .25);
  color: #f2f8fd;
  font-size: 39.500px;
  font-weight: 500;
  letter-spacing: -.1px;
}
.primary .icon { width: 48px; height: 48px; stroke-width: 1.800; }

.stats { display: grid; margin: 0 21px 0 22px; }
.stats-2 { grid-template-columns: 1fr 1fr; gap: 21px; margin-top: 26px; }
.stats-3 { grid-template-columns: 1fr 1fr 1fr; gap: 21px; margin-top: 20px; }
.card {
  display: flex;
  height: 217px;
  border: 3px solid #bdd4e5;
  border-radius: 32px;
  background: #fdfeff;
  box-shadow: 0 3px 6px rgba(40, 80, 120, .1);
}
.stat { flex: 1; display: flex; align-items: center; gap: 41px; padding-left: 39px; }
.stat + .stat { border-left: 3px solid #bdd4e5; }
.badge {
  display: flex;
  align-items: center;
  justify-content: center;
  width: 121px;
  height: 121px;
  border-radius: 50%;
}
.badge .icon { width: 81px; height: 81px; }
.b-districts { background: #d4bdf2; color: #47147f; }
.b-schools { background: #fdf0cf; color: #ab812a; }
.b-active { background: #e7effd; color: #1c4396; }
.b-dev { background: #e8fdee; color: #459a48; }
.b-staff { background: #b6c3fa; color: #06208f; }
.b-agencies { background: #f7cdcd; color: #8e1812; }
.num { font-size: 59px; line-height: 82px; font-weight: 700; letter-spacing: .9px; color: #2c67a6; }
.label { font-size: 34px; line-height: 48px; letter-spacing: .2px; color: #5a6a7f; }

.content { display: flex; gap: 44px; margin: 28px 21px 0 22px; }
.map-col { width: 1914px; }
.map { display: block; width: 1368.500px; height: 1459px; margin-left: 274px; }
.map path, .island {
  stroke: #000;
  stroke-width: 5.600px;
  stroke-linejoin: round;
  vector-effect: non-scaling-stroke;
}
.A { fill: #2f6df6; }
.D { fill: #5bc65f; }
.I { fill: #f8ce46; }
.N { fill: #827f7f; }

.legend { display: flex; justify-content: center; gap: 10px; margin-top: 12px; }
.pill {
  display: flex;
  align-items: center;
  height: 56px;
  padding: 0 20px;
  border: 3px solid;
  border-radius: 28px;
  font-size: 34.500px;
  letter-spacing: .45px;
  font-weight: 600;
  white-space: nowrap;
}
.p-active { background: #e7effd; border-color: #3b71ea; color: #1c4396; }
.p-both { background: #e7effd; border-color: #63c168; color: #459a48; }
.p-interested { background: #fff8e3; border-color: #f7cd55; color: #f3c14c; }
.p-dev { background: #e8fdee; border-color: #63c168; color: #459a48; }
.p-inactive { background: #f2f2f2; border-color: #827f7f; color: #4b4949; }

.admin { width: 938px; display: flex; flex-direction: column; align-items: center; }
h2 {
  margin: 55px 0 0;
  font-size: 59px;
  line-height: 80px;
  font-weight: 600;
  letter-spacing: -2.800px;
  color: #97bc52;
  white-space: nowrap;
}
.state {
  display: flex;
  align-items: center;
  gap: 7px;
  height: 81px;
  margin-top: 39px;
  padding: 0 20px;
  border: 3px solid #447ff0;
  border-radius: 41px;
  background: #bad8fc;
  color: #1f4b96;
  font-size: 40px;
  font-weight: 600;
}
.state .icon { width: 42px; height: 42px; }
```
